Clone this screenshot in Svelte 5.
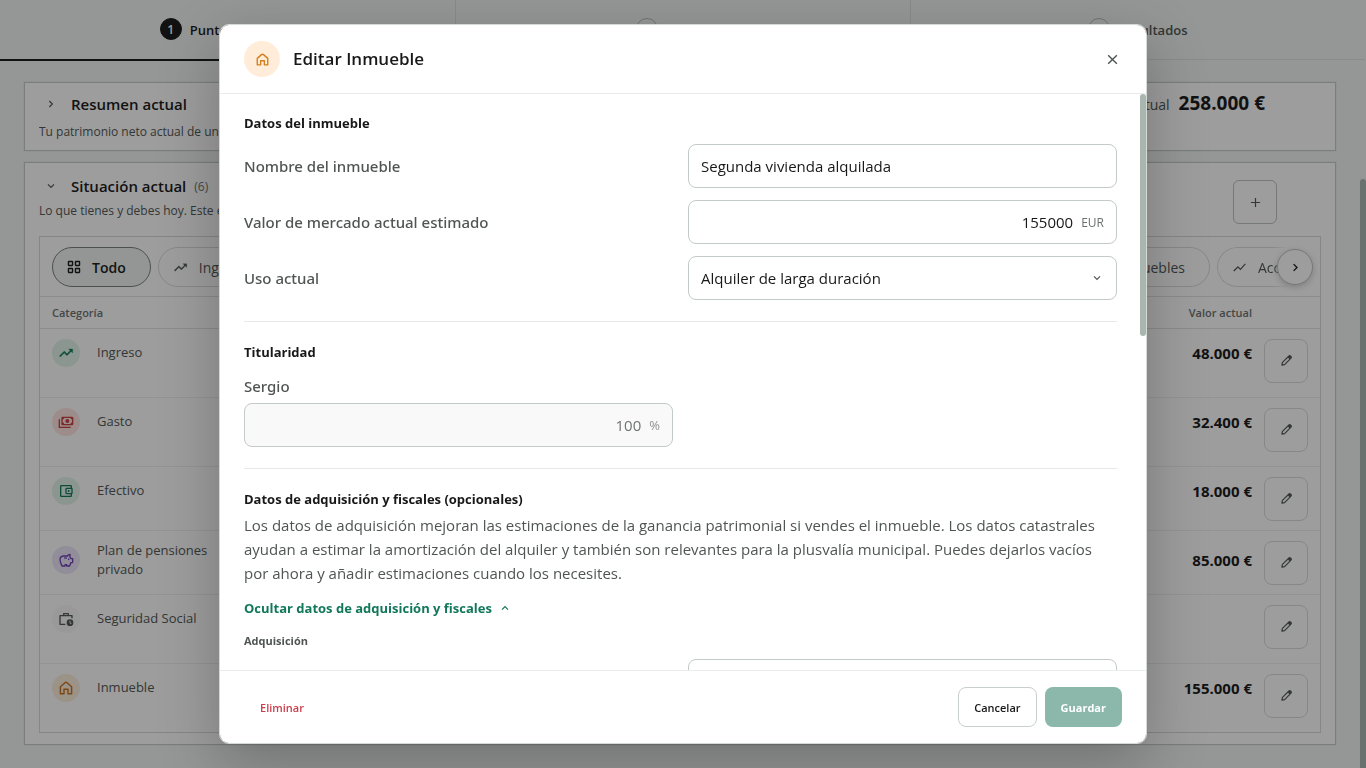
<script>
  const rows = [
    { name: 'Ingreso', icon: 'trend', tone: 'green', value: '48.000 €' },
    { name: 'Gasto', icon: 'cash', tone: 'red', value: '32.400 €' },
    { name: 'Efectivo', icon: 'wallet', tone: 'green', value: '18.000 €', compact: true },
    { name: 'Plan de pensiones privado', icon: 'pig', tone: 'violet', value: '85.000 €', compact: true, double: true },
    { name: 'Seguridad Social', icon: 'work', tone: 'grey', value: '' },
    { name: 'Inmueble', icon: 'home', tone: 'orange', value: '155.000 €' }
  ];
  let nombre = $state('Segunda vivienda alquilada');
  let valor = $state('155000');
  let uso = $state('larga');
  let cuota = $state('100');
  let fecha = $state('');
</script>

{#snippet icon(name, size)}
  <svg class="icon" viewBox="0 0 24 24" width={size} height={size} aria-hidden="true">
    {#if name === 'trend'}
      <path d="M16 6l2.29 2.29-4.88 4.88-4-4L2 16.59 3.41 18l6-6 4 4 6.3-6.29L22 12V6z" fill="currentColor" stroke="currentColor" stroke-width=".4" />
    {:else if name === 'chart'}
      <path d="M3.5 18.49l6-6.01 4 4L22 6.92l-1.41-1.41-7.09 7.97-4-4L2 16.99z" fill="currentColor" />
    {:else if name === 'grid'}
      <g fill="none" stroke="currentColor" stroke-width="2.4"><rect x="2.5" y="2.5" width="7" height="7" rx=".8" /><rect x="14.5" y="2.5" width="7" height="7" rx=".8" /><rect x="2.5" y="14.5" width="7" height="7" rx=".8" /><rect x="14.5" y="14.5" width="7" height="7" rx=".8" /></g>
    {:else if name === 'cash'}
      <g fill="none" stroke="currentColor" stroke-width="2"><rect x="6" y="5" width="16" height="11" rx="1" /><path d="M2 8v12h17" /></g>
      <circle cx="14" cy="10.500" r="3" fill="currentColor" />
      <path d="M6 5h3.500a3.500 3.500 0 0 1-3.500 3.500zM22 5h-3.500a3.500 3.500 0 0 0 3.500 3.500zM6 16h3.500a3.500 3.500 0 0 0-3.500-3.500zM22 16h-3.500a3.500 3.500 0 0 1 3.500-3.500z" fill="currentColor" />
    {:else if name === 'wallet'}
      <path d="M21 7.280V5c0-1.100-.9-2-2-2H5a2 2 0 0 0-2 2v14a2 2 0 0 0 2 2h14c1.100 0 2-.9 2-2v-2.280A2 2 0 0 0 22 15V9a2 2 0 0 0-1-1.720zM20 9v6h-7V9h7zM5 19V5h14v2h-6a2 2 0 0 0-2 2v6a2 2 0 0 0 2 2h6v2H5z" fill="currentColor" />
      <circle cx="16" cy="12" r="1.500" fill="currentColor" />
    {:else if name === 'pig'}
      <path d="M8 6h6c1-1.400 2.300-2.200 4-2.400v4l1.500 2.400H22v5.500l-3 1L17.500 21H13v-2h-2.500v2H6C4.500 17.500 3 14.500 3 11.500A5.500 5.500 0 0 1 8 6z" fill="none" stroke="currentColor" stroke-width="2" stroke-linejoin="round" />
      <path d="M9 9h4.500" stroke="currentColor" stroke-width="1.800" />
      <circle cx="16" cy="11" r="1.200" fill="currentColor" />
    {:else if name === 'work'}
      <path d="M11 20H3V7h18v4M8.500 7V4h7v3" fill="none" stroke="currentColor" stroke-width="2" stroke-linejoin="round" />
      <path d="M18 12.500a5 5 0 1 0 0 10 5 5 0 0 0 0-10zm1.800 7.300L17.400 18v-3.500h1.200v2.900l1.800 1.500z" fill="currentColor" />
    {:else if name === 'home'}
      <path d="M3.600 20.500V10.200L10.400 4.200a2.400 2.400 0 0 1 3.200 0l6.800 6v10.300h-5.400v-6.500H9v6.500z" fill="none" stroke="currentColor" stroke-width="2.200" stroke-linejoin="round" />
    {:else if name === 'pencil'}
      <path d="M3.500 20.500l1-5L16.500 3.700a2 2 0 0 1 2.800 0l1 1a2 2 0 0 1 0 2.800L8.500 19.500z" fill="none" stroke="currentColor" stroke-width="2.200" stroke-linejoin="round" />
      <path d="M14 6l4-3.300 3.300 3.300-3.300 4z" fill="currentColor" />
    {:else if name === 'close'}
      <path d="M4 4l16 16M20 4L4 20" fill="none" stroke="currentColor" stroke-width="2.600" />
    {:else if name === 'plus'}
      <path d="M12 2v20M2 12h20" fill="none" stroke="currentColor" stroke-width="2.600" />
    {:else if name === 'down'}
      <path d="M3 7l9 9 9-9" fill="none" stroke="currentColor" stroke-width="3.600" />
    {:else if name === 'up'}
      <path d="M3 17l9-9 9 9" fill="none" stroke="currentColor" stroke-width="3.600" />
    {:else if name === 'right'}
      <path d="M7 3l9 9-9 9" fill="none" stroke="currentColor" stroke-width="3.600" />
    {/if}
  </svg>
{/snippet}

<div class="page">
  <nav class="steps" aria-label="Pasos">
    <div class="step active"><span class="num">1</span><span>Punto de partida</span></div>
    <div class="step"><span class="num">2</span><span>Supuestos</span></div>
    <div class="step"><span class="num">3</span><span>Resultados</span></div>
  </nav>
  <main>
    <section class="card summary">
      <div class="text">
        <h2><button class="fold" aria-label="Mostrar resumen">{@render icon('right', 8)}</button>Resumen actual</h2>
        <p>Tu patrimonio neto actual de un vistazo.</p>
      </div>
      <div class="total"><span>Patrimonio neto actual</span><strong>258.000 €</strong></div>
    </section>
    <section class="card">
      <div class="head">
        <div class="text">
          <h2><button class="fold" aria-label="Ocultar situación">{@render icon('down', 8)}</button>Situación actual <small>(6)</small></h2>
          <p>Lo que tienes y debes hoy. Este es tu punto de partida.</p>
        </div>
        <button class="square" aria-label="Añadir">{@render icon('plus', 11)}</button>
      </div>
      <div class="box">
        <div class="filters">
          <div class="chips">
            <button class="chip on">{@render icon('grid', 14)}Todo</button>
            <button class="chip">{@render icon('trend', 15)}Ingresos</button>
            <button class="chip late">{@render icon('home', 14)}Inmuebles</button>
            <button class="chip last">{@render icon('chart', 15)}Acciones</button>
          </div>
          <button class="next" aria-label="Siguiente">{@render icon('right', 9)}</button>
        </div>
        <table>
          <thead>
            <tr><th class="cat">Categoría</th><th class="amount">Valor actual</th><th class="act" aria-label="Acciones"></th></tr>
          </thead>
          <tbody>
            {#each rows as row}
              <tr class:compact={row.compact} class:double={row.double}>
                <td><div class="name"><span class="dot {row.tone}">{@render icon(row.icon, 16)}</span><span class="label">{row.name}</span></div></td>
                <td class="amount">{row.value}</td>
                <td class="act"><button class="square soft" aria-label="Editar {row.name}">{@render icon('pencil', 13)}</button></td>
              </tr>
            {/each}
          </tbody>
        </table>
      </div>
    </section>
  </main>
  <span class="page-thumb"></span>
</div>

<div class="overlay">
  <div class="modal" role="dialog" aria-modal="true" aria-labelledby="titulo">
    <header>
      <span class="badge">{@render icon('home', 15)}</span>
      <h1 id="titulo">Editar Inmueble</h1>
      <button class="close" aria-label="Cerrar">{@render icon('close', 13)}</button>
    </header>
    <div class="view">
      <div class="body">
        <section>
          <h3>Datos del inmueble</h3>
          <div class="fields">
            <div class="row">
              <label for="nombre">Nombre del inmueble</label>
              <div class="control"><input id="nombre" type="text" bind:value={nombre} /></div>
            </div>
            <div class="row">
              <label for="valor">Valor de mercado actual estimado</label>
              <div class="control"><input id="valor" class="numeric" type="text" inputmode="numeric" bind:value={valor} /><span class="unit">EUR</span></div>
            </div>
            <div class="row">
              <label for="uso">Uso actual</label>
              <div class="control">
                <select id="uso" bind:value={uso}><option value="larga">Alquiler de larga duración</option></select>
                <span class="caret">{@render icon('down', 8)}</span>
              </div>
            </div>
          </div>
        </section>
        <section>
          <h3>Titularidad</h3>
          <div class="owners">
            <div class="owner">
              <label for="cuota">Sergio</label>
              <div class="control disabled"><input id="cuota" class="numeric" type="text" disabled bind:value={cuota} /><span class="unit">%</span></div>
            </div>
          </div>
        </section>
        <section>
          <h3>Datos de adquisición y fiscales (opcionales)</h3>
          <p class="help">Los datos de adquisición mejoran las estimaciones de la ganancia patrimonial si vendes el inmueble. Los datos catastrales ayudan a estimar la amortización del alquiler y también son relevantes para la plusvalía municipal. Puedes dejarlos vacíos por ahora y añadir estimaciones cuando los necesites.</p>
          <button class="toggle">Ocultar datos de adquisición y fiscales {@render icon('up', 8)}</button>
          <h4>Adquisición</h4>
          <div class="row">
            <span></span>
            <div class="control"><input type="text" aria-label="Adquisición" bind:value={fecha} /></div>
          </div>
        </section>
      </div>
      <span class="thumb"></span>
    </div>
    <footer>
      <button class="btn danger">Eliminar</button>
      <button class="btn outline">Cancelar</button>
      <button class="btn primary">Guardar</button>
    </footer>
  </div>
</div>

<style>
  :global(body) { background: #f0f5f3; overflow: hidden; }
  :global(#app) { font-family: "Open Sans", "Noto Sans", sans-serif; color: #181818; }
  * { box-sizing: border-box; }
  h1, h2, h3, h4, p { margin: 0; }
  button, input, select { font: inherit; color: inherit; margin: 0; }
  button { padding: 0; border: 0; background: none; cursor: pointer; }
  .icon { display: block; flex: none; }

  .page { position: relative; height: 100vh; overflow: hidden; }
  .steps { display: grid; grid-template-columns: repeat(3, 1fr); height: 61px; padding-right: 1px; }
  .step { display: flex; align-items: center; justify-content: center; gap: 8px; border-bottom: 1px solid #dce1df; margin-bottom: 1px; font-size: 13px; font-weight: 600; color: #4f5553; }
  .step + .step { border-left: 1px solid #dce1df; }
  .step.active { margin-bottom: 0; border-bottom: 2px solid #181818; color: #181818; }
  .num { display: grid; place-items: center; width: 22px; height: 22px; margin-bottom: 1px; border: 1px solid #b5bcb9; border-radius: 50%; font-size: 12px; }
  .active .num { background: #181818; border-color: #181818; color: #fff; }
  main { display: grid; gap: 11px; padding: 21px 30px 24px 24px; }
  .card { background: #fff; border: 1px solid #c5cbc9; padding: 0 14px 11px; box-shadow: 0 0 1px #c5cbc9; }
  .summary { display: flex; justify-content: space-between; height: 69px; padding-right: 70px; padding-top: 9px; }
  .text h2 { display: flex; align-items: center; height: 24px; font-size: 15px; font-weight: 600; }
  .text p { margin-top: 3px; font-size: 12px; line-height: 20px; color: #4f5553; white-space: nowrap; overflow: hidden; }
  .head .text { width: 50%; }
  .summary .text p { margin-top: 6px; }
  .text small { margin-left: 8px; font-size: 12px; font-weight: 400; color: #6b716f; }
  .fold { display: grid; place-items: center; width: 24px; height: 24px; margin-right: 8px; color: #4f5553; }
  .total { display: flex; align-items: baseline; gap: 9px; height: 24px; line-height: 22px; font-size: 14px; font-weight: 500; color: #4f5553; }
  .total strong { font-size: 19px; font-weight: 700; color: #181818; }
  .head { display: flex; justify-content: space-between; height: 73px; padding: 11px 44px 0 0; }
  .square { display: grid; place-items: center; width: 44px; height: 44px; margin-top: 6px; border: 1px solid #bcc3c0; border-radius: 6px; background: #fff; color: #4f5553; }
  .square.soft { margin: 0; border-color: #d8dddb; border-radius: 8px; }
  .box { border: 1px solid #d5dad8; }
  .filters { position: relative; height: 60px; padding: 10px 12px; border-bottom: 1px solid #e0e4e2; }
  .chips { display: flex; gap: 7px; overflow: hidden; }
  .chip { display: flex; flex: none; align-items: center; gap: 11px; height: 40px; padding: 0 24px 0 14px; border: 1px solid #d8dddb; border-radius: 20px; font-size: 14px; color: #4f5553; }
  .chip.on { background: #eef3f1; border-color: #777f7c; color: #181818; font-weight: 600; }
  .late { margin-left: auto; }
  .last { width: 91px; overflow: hidden; border-right: 0; border-radius: 20px 0 0 20px; mask-image: linear-gradient(90deg, #000 55px, transparent 72px); }
  .next { position: absolute; right: 7px; top: 12px; display: grid; place-items: center; width: 36px; height: 36px; border: 1px solid #bcc3c0; border-radius: 50%; background: #fff; box-shadow: 0 2px 6px #0003; }
  table { width: 100%; border-collapse: collapse; table-layout: fixed; }
  th { height: 31px; padding: 0 12px; text-align: left; font-size: 11px; font-weight: 600; color: #6b716f; border-bottom: 1px solid #e0e4e2; }
  td { height: 69px; padding: 10px 12px 0; vertical-align: top; border-bottom: 1px solid #edf0ef; }
  .compact td { height: 64px; }
  tr:last-child td { border-bottom: 0; }
  .amount { width: 120px; padding-right: 0; text-align: right; }
  th.amount { padding-right: 0; white-space: nowrap; }
  td.amount { font-size: 15px; line-height: 28px; font-weight: 700; white-space: nowrap; }
  .double td.amount { line-height: 38px; }
  .act { width: 68px; }
  .name { display: flex; align-items: center; gap: 17px; }
  .dot { display: grid; place-items: center; flex: none; width: 28px; height: 28px; border-radius: 50%; }
  .label { max-width: 116px; font-size: 13px; line-height: 19px; color: #4f5553; }
  .green { background: #e3f3ec; color: #11785a; }
  .red { background: #fde5e2; color: #c93e42; }
  .violet { background: #ebe5f8; color: #6b3fb8; }
  .grey { background: #f8f9f8; color: #4f5553; }
  .orange { background: #fdeedc; color: #c9741c; }
  .page-thumb { position: absolute; right: 0; top: 179px; bottom: 0; width: 6px; border-radius: 3px 3px 0 0; background: #abb8b2; }

  .overlay { position: fixed; inset: 0; display: flex; justify-content: center; padding: 24px; background: rgba(10, 10, 10, .4); }
  .modal { display: flex; flex-direction: column; width: 100%; max-width: 928px; overflow: hidden; background: #fff; background-clip: padding-box; border: 1px solid #d5dad8; border-radius: 10px; box-shadow: 0 20px 60px rgba(0, 0, 0, .25); }
  header { display: flex; align-items: center; gap: 13px; height: 69px; flex: none; padding: 0 24px; border-bottom: 1px solid #ebedec; }
  .badge { display: grid; place-items: center; width: 36px; height: 36px; border-radius: 50%; background: #ffedd9; color: #d47e1c; }
  h1 { flex: 1; font-size: 17px; line-height: 24px; font-weight: 600; }
  .close { display: grid; place-items: center; width: 20px; height: 20px; color: #4f5553; }
  .view { position: relative; display: flex; flex: 1; min-height: 0; }
  .body { flex: 1; overflow-y: auto; scrollbar-width: none; padding: 20px 29px 24px 24px; }
  .thumb { position: absolute; right: 0; top: 0; width: 6px; height: 42%; border-radius: 3px; background: #a9b6b0; }
  .body section + section { margin-top: 21px; padding-top: 21px; border-top: 1px solid #e6e9e8; }
  h3 { margin-bottom: 12px; font-size: 13px; line-height: 18px; font-weight: 700; }
  .fields { display: grid; gap: 12px; }
  .row, .owners { display: grid; grid-template-columns: 1fr 1fr; gap: 15px; align-items: center; }
  label { font-family: "Noto Sans", "Open Sans", sans-serif; font-size: 15px; line-height: 26px; font-weight: 500; color: #4f5553; }
  .owner { display: grid; gap: 4px; }
  .control { position: relative; display: flex; align-items: center; height: 44px; border: 1px solid #c3cac7; border-radius: 8px; background: #fff; }
  .control input, .control select { flex: 1; min-width: 0; height: 42px; padding: 0 12px; border: 0; border-radius: 8px; outline: 0; background: none; appearance: none; font-size: 15px; }
  .control .numeric { text-align: right; padding-right: 8px; }
  .unit { padding-right: 12px; font-size: 12px; font-weight: 500; color: #6b716f; }
  .disabled { background: #f9f9f9; }
  .disabled .numeric { color: #6f7472; }
  .disabled .unit { font-size: 13px; color: #8d9290; }
  .caret { position: absolute; right: 15px; color: #4f5553; pointer-events: none; }
  .body h3:has(+ .help) { margin-bottom: 5px; }
  .help { font-size: 15px; line-height: 24px; color: #4f5553; }
  .toggle { display: flex; align-items: center; gap: 9px; margin-top: 13px; font-size: 13px; line-height: 20px; font-weight: 700; color: #11785a; }
  h4 { margin: 14px 0 9px; font-size: 11px; line-height: 18px; font-weight: 700; color: #4f5553; }
  footer { display: flex; align-items: center; gap: 8px; flex: none; height: 73px; padding: 0 24px; border-top: 1px solid #ebedec; }
  .btn { height: 40px; padding: 0 15px; border: 1px solid transparent; border-radius: 8px; font-size: 11px; font-weight: 600; }
  .danger { margin-right: auto; color: #cb3f4c; }
  .outline { border-color: #c9cfcd; background: #fff; }
  .primary { background: #8bb8aa; color: #fff; font-weight: 700; }
</style>
